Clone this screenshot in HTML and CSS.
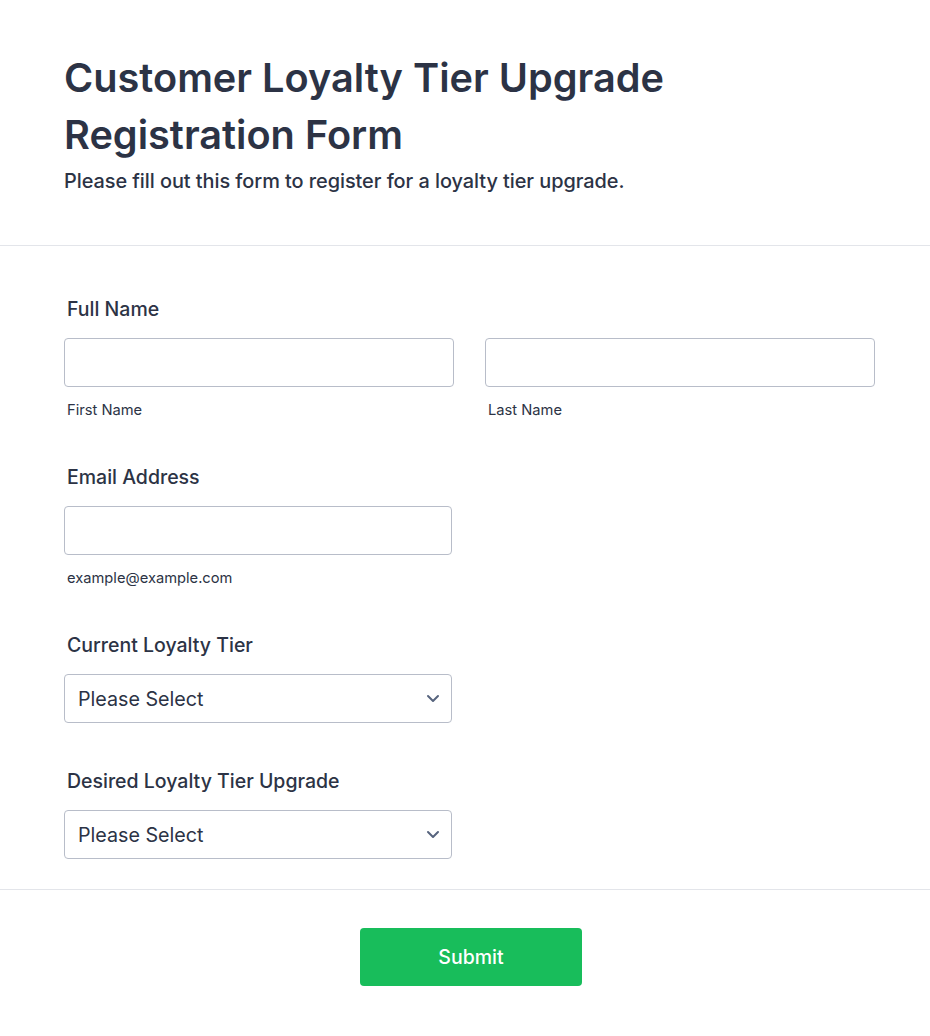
FILE: index.html
```html
<!DOCTYPE html>
<html lang="en">
<head>
<meta charset="utf-8">
<title>Customer Loyalty Tier Upgrade Registration Form</title>
<link rel="stylesheet" href="styles.css">
</head>
<body>
<div class="page">
  <header class="form-header">
    <h1 class="title">Customer Loyalty Tier Upgrade Registration Form</h1>
    <p class="subtitle">Please fill out this form to register for a loyalty tier upgrade.</p>
  </header>

  <section class="form-body">
    <div class="field field-first">
      <label class="label">Full Name</label>
      <div class="name-row">
        <div class="name-col">
          <input class="input" type="text">
          <span class="sublabel">First Name</span>
        </div>
        <div class="name-col">
          <input class="input" type="text">
          <span class="sublabel">Last Name</span>
        </div>
      </div>
    </div>

    <div class="field">
      <label class="label">Email Address</label>
      <input class="input input-half" type="email">
      <span class="sublabel">example@example.com</span>
    </div>

    <div class="field">
      <label class="label">Current Loyalty Tier</label>
      <div class="select input-half">
        <span class="select-text">Please Select</span>
        <svg class="chevron" width="14" height="9" viewBox="0 0 14 9"><path d="M2 2 L7 7 L12 2" fill="none" stroke="#57647e" stroke-width="2" stroke-linecap="round" stroke-linejoin="round"/></svg>
      </div>
    </div>

    <div class="field field-last">
      <label class="label">Desired Loyalty Tier Upgrade</label>
      <div class="select input-half">
        <span class="select-text">Please Select</span>
        <svg class="chevron" width="14" height="9" viewBox="0 0 14 9"><path d="M2 2 L7 7 L12 2" fill="none" stroke="#57647e" stroke-width="2" stroke-linecap="round" stroke-linejoin="round"/></svg>
      </div>
    </div>
  </section>

  <footer class="form-footer">
    <button class="submit" type="button">Submit</button>
  </footer>
</div>
</body>
</html>
```

FILE: styles.css
```css
* { box-sizing: border-box; }
html, body {
  margin: 0;
  padding: 0;
  background: #ffffff;
}
body {
  font-family: Inter, "Noto Sans", sans-serif;
  color: #2c3345;
}
.page {
  width: 930px;
}
.form-header {
  padding: 50px 64px 52px 64px;
  border-bottom: 1px solid #e3e5ea;
}
.title {
  margin: 0;
  font-size: 39.7px;
  line-height: 57px;
  font-weight: 600;
  max-width: 680px;
}
.subtitle {
  margin: 5px 0 0 0;
  font-size: 19.9px;
  line-height: 24px;
  font-weight: 500;
  letter-spacing: -0.05px;
}
.form-body {
  padding: 50px 55px 30px 64px;
  border-bottom: 1px solid #e3e5ea;
}
.field {
  display: flex;
  flex-direction: column;
  align-items: flex-start;
  margin-top: 45px;
}
.field-first { margin-top: 0; }
.field-last { margin-top: 45px; }
.label {
  display: block;
  font-size: 19.5px;
  line-height: 24px;
  font-weight: 500;
  padding: 1px 0 0 3px;
  margin-bottom: 17px;
}
.name-row {
  display: flex;
  gap: 31px;
  width: 811px;
}
.name-col {
  flex: 1;
  display: flex;
  flex-direction: column;
}
.input {
  display: block;
  width: 100%;
  height: 49px;
  border: 1px solid #b8bdc9;
  border-radius: 4px;
  background: #fff;
  font-family: inherit;
  font-size: 18px;
  padding: 0 14px;
  margin: 0;
}
.input-half { width: 388px; }
.sublabel {
  display: block;
  font-size: 14.7px;
  line-height: 18px;
  padding-left: 3px;
  margin-top: 14px;
  color: #2c3345;
}
.select {
  height: 49px;
  border: 1px solid #b8bdc9;
  border-radius: 4px;
  display: flex;
  align-items: center;
  justify-content: space-between;
  padding: 0 11px 0 13px;
}
.select-text {
  font-size: 19.7px;
  line-height: 24px;
  color: #2c3345;
}
.chevron { display: block; }
.form-footer {
  display: flex;
  justify-content: center;
  padding: 38px 0 50px 12px;
}
.submit {
  width: 222px;
  height: 58px;
  border: none;
  border-radius: 4px;
  background: #18bd5b;
  color: #ffffff;
  font-family: inherit;
  font-size: 19.5px;
  font-weight: 500;
}
```
